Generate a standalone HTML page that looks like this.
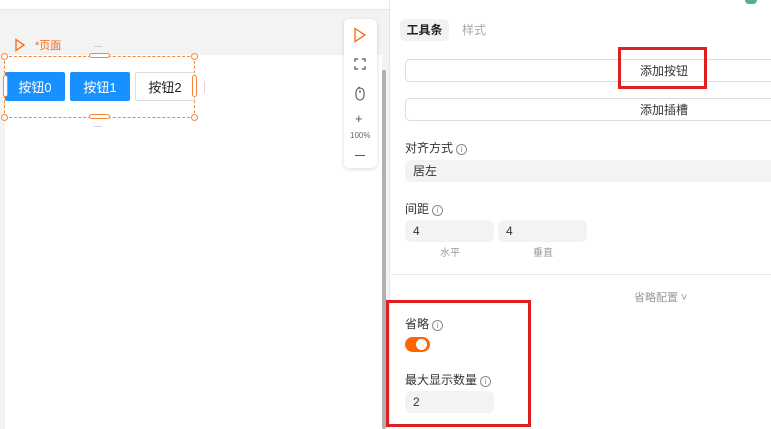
<!DOCTYPE html>
<html><head><meta charset="utf-8"><style>
*{margin:0;padding:0;box-sizing:border-box}
body{width:771px;height:429px;overflow:hidden;position:relative;background:#fff;font-family:"Liberation Sans","Noto Sans CJK SC",sans-serif;font-size:12px;color:#333}
.a{position:absolute}
.btn{position:absolute;height:29px;top:72px;display:flex;align-items:center;justify-content:center;font-size:13px;border-radius:2px}
.inp{position:absolute;background:#f3f3f3;border-radius:6px;height:22px;padding-left:8px;line-height:22px;font-size:12px;color:#333}
.lbl{position:absolute;font-size:12px;color:#333}
.i{display:inline-block;width:11px;height:11px;border:1px solid #888;border-radius:50%;font-size:8px;line-height:9px;text-align:center;color:#888;margin-left:3px;vertical-align:0px}
</style></head><body>
<div class="a" style="left:0;top:0;width:390px;height:9px;background:#fff"></div>
<div class="a" style="left:0;top:9px;width:390px;height:420px;background:#f3f3f3;border-top:1px solid #e6e6e6"></div>
<div class="a" style="left:5px;top:55px;width:377px;height:374px;background:#fff"></div>
<div class="a" style="left:382px;top:70px;width:4px;height:359px;background:#b0b0b0;border-radius:2px"></div>
<div class="a" style="left:389px;top:0;width:1px;height:429px;background:#e6e6e6"></div>
<svg class="a" style="left:14px;top:38px" width="12" height="14"><path d="M2 1.5L10 7L2 12.5Z" fill="none" stroke="#f60" stroke-width="1.3"/></svg>
<div class="a" style="left:35px;top:37px;font-size:11px;color:#f60">*页面</div>
<div class="a" style="left:94px;top:46px;width:8px;height:1px;background:#d8c8e0"></div>
<div class="a" style="left:94px;top:126px;width:8px;height:1px;background:#d8c8e0"></div>
<div class="a" style="left:4px;top:56px;width:191px;height:62px;border:1px dashed #f7883a"></div>
<div class="btn" style="left:5px;width:60px;background:#1890ff;color:#fff">按钮0</div>
<div class="btn" style="left:70px;width:60px;background:#1890ff;color:#fff">按钮1</div>
<div class="btn" style="left:135px;width:60px;border:1px solid #ddd;color:#222">按钮2</div>
<div class="a" style="left:89px;top:53px;width:21px;height:5px;border:1px solid #f7883a;border-radius:3px;background:#fff"></div>
<div class="a" style="left:89px;top:114px;width:21px;height:5px;border:1px solid #f7883a;border-radius:3px;background:#fff"></div>
<div class="a" style="left:3px;top:75px;width:5px;height:22px;border:1px solid #f7883a;border-radius:3px;background:#fff"></div>
<div class="a" style="left:192px;top:75px;width:5px;height:22px;border:1px solid #f7883a;border-radius:3px;background:#fff"></div>
<div class="a" style="left:1px;top:53px;width:7px;height:7px;border:1px solid #f7883a;border-radius:50%;background:#fff"></div>
<div class="a" style="left:191px;top:53px;width:7px;height:7px;border:1px solid #f7883a;border-radius:50%;background:#fff"></div>
<div class="a" style="left:1px;top:114px;width:7px;height:7px;border:1px solid #f7883a;border-radius:50%;background:#fff"></div>
<div class="a" style="left:191px;top:114px;width:7px;height:7px;border:1px solid #f7883a;border-radius:50%;background:#fff"></div>
<div class="a" style="left:204px;top:81px;width:1px;height:12px;background:#e0d0e8"></div>
<div class="a" style="left:344px;top:19px;width:33px;height:149px;background:#fff;border-radius:5px;box-shadow:0 1px 4px rgba(0,0,0,.15)"></div>
<svg class="a" style="left:353px;top:27px" width="14" height="16"><path d="M2 1.5L12 8L2 14.5Z" fill="none" stroke="#f60" stroke-width="1.3"/></svg>
<svg class="a" style="left:354px;top:58px" width="12" height="12" fill="none" stroke="#555" stroke-width="1.2"><path d="M1 4V1H4M8 1H11V4M11 8V11H8M4 11H1V8"/></svg>
<svg class="a" style="left:355px;top:86px" width="10" height="15" fill="none" stroke="#555" stroke-width="1.1"><rect x="1" y="2" width="8" height="12" rx="4"/><path d="M5 4V7M3 1L5 2"/></svg>
<div class="a" style="left:355px;top:111px;font-size:13px;color:#555">+</div>
<div class="a" style="left:350px;top:131px;font-size:8px;color:#666">100%</div>
<div class="a" style="left:355px;top:155px;width:10px;height:1px;background:#555"></div>
<div class="a" style="left:745px;top:0;width:12px;height:4px;background:#5a9;border-radius:0 0 4px 4px"></div>
<div class="a" style="left:400px;top:19px;width:49px;height:22px;background:#f2f2f2;border-radius:5px;text-align:center;line-height:22px;color:#222;font-weight:bold">工具条</div>
<div class="a" style="left:462px;top:21px;color:#aaa">样式</div>
<div class="a" style="left:405px;top:59px;width:380px;height:23px;border:1px solid #ddd;border-radius:5px"></div>
<div class="a" style="left:640px;top:62px;color:#333">添加按钮</div>
<div class="a" style="left:405px;top:98px;width:380px;height:23px;border:1px solid #ddd;border-radius:5px"></div>
<div class="a" style="left:640px;top:101px;color:#333">添加插槽</div>
<div class="a" style="left:618px;top:47px;width:89px;height:42px;border:3px solid #e02020"></div>
<div class="lbl" style="left:405px;top:139px">对齐方式<span class="i">i</span></div>
<div class="inp" style="left:405px;top:160px;width:380px">居左</div>
<div class="lbl" style="left:405px;top:200px">间距<span class="i">i</span></div>
<div class="inp" style="left:405px;top:220px;width:89px">4</div>
<div class="inp" style="left:498px;top:220px;width:89px">4</div>
<div class="a" style="left:440px;top:244px;font-size:10px;color:#999">水平</div>
<div class="a" style="left:533px;top:244px;font-size:10px;color:#999">垂直</div>
<div class="a" style="left:391px;top:274px;width:380px;height:1px;background:#e8e8e8"></div>
<div class="a" style="left:634px;top:289px;font-size:11px;color:#999">省略配置 ˅</div>
<div class="lbl" style="left:405px;top:315px">省略<span class="i">i</span></div>
<div class="a" style="left:405px;top:337px;width:25px;height:15px;background:#f60;border-radius:8px"></div>
<div class="a" style="left:416px;top:339px;width:11px;height:11px;background:#fff;border-radius:50%"></div>
<div class="lbl" style="left:405px;top:371px">最大显示数量<span class="i">i</span></div>
<div class="inp" style="left:405px;top:391px;width:89px">2</div>
<div class="a" style="left:386px;top:300px;width:145px;height:127px;border:3px solid #e02020"></div>
</body></html>
